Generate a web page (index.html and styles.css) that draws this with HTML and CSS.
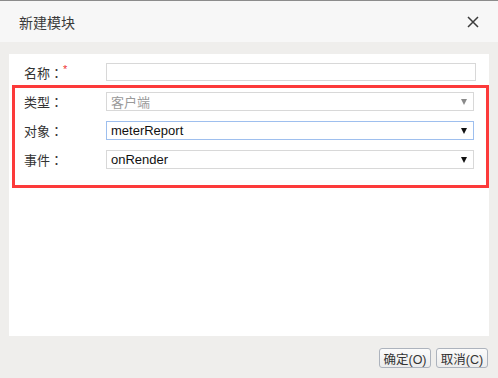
FILE: index.html
```html
<!DOCTYPE html>
<html lang="zh">

<head>
  <meta charset="utf-8">
  <meta name="viewport" content="width=device-width, initial-scale=1">
  <title>新建模块</title>
  <link rel="stylesheet" href="styles.css">
</head>

<body>
  <div class="dialog">
    <div class="dialog-header">
      <span class="dialog-title">新建模块</span>
      <svg class="close-icon" width="12" height="12" viewBox="0 0 12 12">
        <path d="M1 1 L11 11 M11 1 L1 11" stroke="#3c3c3c" stroke-width="1.5" fill="none" />
      </svg>
    </div>

    <div class="dialog-body">
      <div class="panel">
        <div class="form-row name-row">
          <span class="label">名称<span class="colon" lang="ja">：</span><span class="required">*</span></span>
          <div class="text-input wide"></div>
        </div>

        <div class="highlight">
          <div class="form-row">
            <span class="label">类型<span class="colon" lang="ja">：</span></span>
            <div class="select disabled">
              <span class="select-text">客户端</span>
              <span class="arrow"></span>
            </div>
          </div>
          <div class="form-row">
            <span class="label">对象<span class="colon" lang="ja">：</span></span>
            <div class="select focused">
              <span class="select-text">meterReport</span>
              <span class="arrow"></span>
            </div>
          </div>
          <div class="form-row">
            <span class="label">事件<span class="colon" lang="ja">：</span></span>
            <div class="select">
              <span class="select-text">onRender</span>
              <span class="arrow"></span>
            </div>
          </div>
        </div>
      </div>
    </div>

    <div class="dialog-footer">
      <button class="btn">确定(O)</button>
      <button class="btn">取消(C)</button>
    </div>
  </div>
</body>

</html>
```

FILE: styles.css
```css
body {
  padding: 0;
  margin: 0;
  background-color: #efeeec;
  font-family: 'Liberation Sans', 'Noto Sans CJK SC', sans-serif;
  color: #333;
}

.dialog {
  width: 498px;
  height: 378px;
  display: flex;
  flex-direction: column;
  border-top: 1px solid #8c8c8c;
  box-sizing: border-box;
}

.dialog-header {
  height: 41px;
  display: flex;
  align-items: center;
  justify-content: space-between;
  padding-left: 19px;
  padding-right: 19px;
  background-color: #f7f7f7;
}

.dialog-title {
  font-size: 14px;
  color: #3a3a3a;
}

.close-icon {
  margin-top: 1px;
}

.dialog-body {
  padding: 12px 9px 0 9px;
}

.panel {
  height: 273px;
  padding-top: 9px;
  background-color: #fff;
}

.form-row {
  display: flex;
  align-items: center;
  height: 19px;
}

.name-row {
  padding-left: 15px;
  height: 18px;
}

.label {
  width: 82px;
  flex-shrink: 0;
  font-size: 13px;
  color: #333;
}

.colon {
  font-family: 'Noto Sans CJK JP', sans-serif;
}

.required {
  color: #e33;
  font-size: 11px;
  vertical-align: top;
}

.text-input {
  height: 18px;
  box-sizing: border-box;
  border: 1px solid #d8d8d8;
  background-color: #fff;
}

.text-input.wide {
  width: 370px;
}

.highlight {
  margin-top: 4px;
  margin-left: 3px;
  border: 3px solid #fc3a3a;
  padding: 4px 0 16px 9px;
  display: flex;
  flex-direction: column;
  gap: 10px;
}

.select {
  width: 368px;
  height: 19px;
  box-sizing: border-box;
  border: 1px solid #d8d8d8;
  display: flex;
  align-items: center;
  justify-content: space-between;
  padding: 0 6px 0 4px;
  font-size: 13px;
  color: #111;
}

.select.focused {
  border-color: #9ebfee;
}

.select.disabled {
  color: #9a9a9a;
}

.arrow {
  width: 0;
  height: 0;
  border-left: 3.5px solid transparent;
  border-right: 3.5px solid transparent;
  border-top: 6px solid #111;
}

.select.disabled .arrow {
  border-top-color: #8a8a8a;
}

.dialog-footer {
  display: flex;
  justify-content: flex-end;
  gap: 5px;
  padding: 12px 10px 0 0;
}

.btn {
  height: 20px;
  width: 52px;
  padding: 0;
  border: 1px solid #adb3bd;
  border-radius: 3px;
  background: linear-gradient(#fbfbfb, #ececec);
  font-family: 'Liberation Sans', 'Noto Sans CJK SC', sans-serif;
  font-size: 12.5px;
  color: #333;
}
```
